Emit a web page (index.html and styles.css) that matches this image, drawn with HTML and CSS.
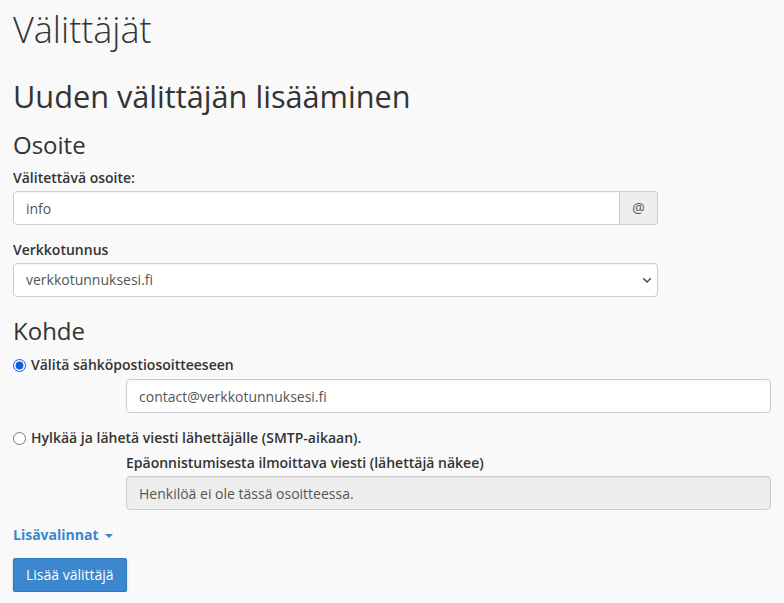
FILE: index.html
```html
<!DOCTYPE html>
<html lang="fi">
<head>
<meta charset="utf-8">
<title>Välittäjät</title>
<link rel="stylesheet" href="styles.css">
</head>
<body>
<div class="page">
  <h1 class="title">Välittäjät</h1>
  <h2 class="subtitle">Uuden välittäjän lisääminen</h2>

  <h3 class="section section-address">Osoite</h3>
  <div class="form-group">
    <label class="field-label" for="email">Välitettävä osoite:</label>
    <div class="input-group">
      <input class="form-control group-input" id="email" type="text" value="info">
      <span class="addon">@</span>
    </div>
  </div>
  <div class="form-group">
    <label class="field-label" for="domain">Verkkotunnus</label>
    <div class="select-wrap">
      <select class="form-control select" id="domain">
        <option>verkkotunnuksesi.fi</option>
      </select>
      <svg class="chevron" width="10" height="7" viewBox="0 0 10 7" aria-hidden="true"><path d="M1.2 1.3 L5 5.1 L8.8 1.3" fill="none" stroke="#444" stroke-width="1.4"/></svg>
    </div>
  </div>

  <h3 class="section section-target">Kohde</h3>
  <div class="radio-row">
    <label class="radio-label"><input type="radio" name="target" class="radio" checked><span>Välitä sähköpostiosoitteeseen</span></label>
  </div>
  <div class="indent">
    <input class="form-control" type="text" value="contact@verkkotunnuksesi.fi">
  </div>
  <div class="radio-row radio-row-second">
    <label class="radio-label"><input type="radio" name="target" class="radio"><span>Hylkää ja lähetä viesti lähettäjälle (SMTP-aikaan).</span></label>
  </div>
  <div class="indent indent-fail">
    <label class="field-label">Epäonnistumisesta ilmoittava viesti (lähettäjä näkee)</label>
    <input class="form-control disabled" type="text" value="Henkilöä ei ole tässä osoitteessa." disabled>
  </div>

  <a class="more-link" href="#">Lisävalinnat<span class="caret"></span></a>

  <div class="actions">
    <button class="btn-primary" type="button">Lisää välittäjä</button>
  </div>
</div>
</body>
</html>
```

FILE: styles.css
```css
* { box-sizing: border-box; }

html, body {
  margin: 0;
  padding: 0;
  background: #f9f9f9;
}

body {
  font-family: "Open Sans", "Liberation Sans", sans-serif;
  font-size: 14px;
  line-height: 20px;
  color: #333;
}

.page {
  padding: 0 13px;
}

.title {
  margin: 10px 0 0;
  font-size: 36px;
  line-height: 40px;
  font-weight: 300;
  color: #333;
}

.subtitle {
  margin: 29px 0 0;
  font-size: 30.7px;
  line-height: 34px;
  font-weight: 400;
  color: #333;
}

.section {
  margin: 0;
  font-size: 24px;
  line-height: 26px;
  font-weight: 400;
  color: #333;
}

.section-address { margin-top: 19px; }
.section-target { margin-top: 21px; }

.form-group { margin-top: 10px; }
.form-group + .form-group { margin-top: 15px; }

.field-label {
  display: block;
  font-weight: 600;
  margin-bottom: 3px;
}

.form-control {
  display: block;
  width: 100%;
  height: 34px;
  padding: 6px 12px;
  font-family: inherit;
  font-size: 14px;
  line-height: 20px;
  color: #555;
  background: #fff;
  border: 1px solid #ccc;
  border-radius: 4px;
  box-shadow: inset 0 1px 1px rgba(0,0,0,0.05);
  outline: none;
}

.input-group {
  display: flex;
  width: 645px;
}

.group-input {
  flex: 1;
  border-radius: 4px 0 0 4px;
}

.addon {
  display: flex;
  align-items: center;
  justify-content: center;
  width: 38px;
  height: 34px;
  background: #eee;
  border: 1px solid #ccc;
  border-left: 0;
  border-radius: 0 4px 4px 0;
  color: #555;
  font-size: 14px;
}

.select-wrap {
  position: relative;
  width: 645px;
}

.select {
  appearance: none;
  -webkit-appearance: none;
  padding-right: 30px;
  color: #555;
}

.chevron {
  position: absolute;
  right: 6px;
  top: 14px;
}

.radio-row {
  margin-top: 11px;
}

.radio-row-second { margin-top: 15px; }

.radio-label {
  display: flex;
  align-items: center;
  font-weight: 600;
}

.radio {
  width: 13px;
  height: 13px;
  margin: 0 5px 0 0;
  accent-color: #0b62d6;
}

.indent {
  margin-left: 113px;
  width: 645px;
  margin-top: 4px;
}

.indent-fail {
  margin-top: 5px;
}

.disabled {
  background: #eee;
  color: #555;
  -webkit-text-fill-color: #555;
  opacity: 1;
}

.more-link {
  display: inline-block;
  margin-top: 15px;
  font-weight: 700;
  color: #3a87cc;
  text-decoration: none;
}

.caret {
  display: inline-block;
  width: 0;
  height: 0;
  margin-left: 6px;
  vertical-align: middle;
  border-top: 4px solid #3a87cc;
  border-left: 4px solid transparent;
  border-right: 4px solid transparent;
}

.actions {
  margin-top: 13px;
}

.btn-primary {
  display: inline-block;
  height: 34px;
  padding: 6px 12px;
  font-family: inherit;
  font-size: 14px;
  line-height: 20px;
  color: #fff;
  background: #3a87cd;
  border: 1px solid #2e78bb;
  border-radius: 2px;
  box-shadow: 0 2px 3px rgba(0,0,0,0.18);
  cursor: pointer;
}
```
